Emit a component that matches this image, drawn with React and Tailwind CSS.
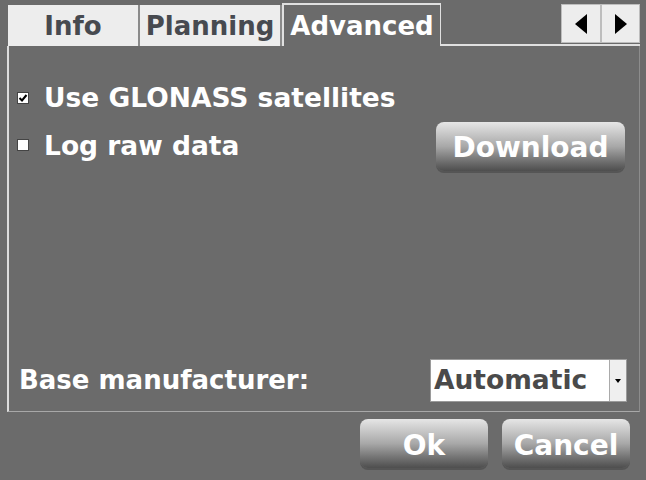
import React, { useState } from 'react';

const font = { fontFamily: '"DejaVu Sans", "Liberation Sans", sans-serif' };

const GlossButton = ({ label, className }) => (
  <button
    className={`rounded-lg bg-gradient-to-b from-[#e6e6e6] via-[#a8a8a8] to-[#4e4e4e] text-white font-bold text-[28px] leading-none shadow-[0_2px_0_#555] ${className}`}
    style={font}
  >
    {label}
  </button>
);

const Tab = ({ label, active, className }) => (
  <div
    className={
      active
        ? `h-[43px] mt-[-2px] border-t-2 border-l-2 border-r border-[#e0e0e0] border-b-0 bg-[#6b6b6b] text-white flex items-center justify-center ${className}`
        : `h-[41px] bg-[#ededed] text-[#474a50] border-r-2 border-[#8a8a8a] flex items-center justify-center ${className}`
    }
  >
    <span className="text-[26px] font-bold leading-none" style={font}>{label}</span>
  </div>
);

const Check = ({ checked, onClick }) => (
  <button
    onClick={onClick}
    className="w-[12px] h-[12px] bg-white border border-[#444] flex items-center justify-center"
  >
    {checked && (
      <svg width="10" height="10" viewBox="0 0 10 10"><path d="M1.5 5 L4 7.5 L8.5 2" stroke="#000" strokeWidth="2" fill="none" /></svg>
    )}
  </button>
);

export default function App() {
  const [glonass, setGlonass] = useState(true);
  const [raw, setRaw] = useState(false);

  return (
    <div className="w-[646px] h-[480px] bg-[#6b6b6b] overflow-hidden flex flex-col" style={font}>
      {/* tab strip */}
      <div className="flex items-end pt-[5px] pl-[8px] pr-[6px] h-[46px]">
        <Tab label="Info" className="w-[132px]" />
        <Tab label="Planning" className="w-[142px]" />
        <Tab label="Advanced" active className="w-[159px]" />
        <div className="flex-1 self-stretch flex flex-col">
          <div className="flex-1 flex justify-end">
            <div className="flex h-[39px] mt-[-1px]">
              <button className="w-[40px] h-full bg-[#ededed] border border-[#bdbdbd] flex items-center justify-center">
                <svg width="12" height="20" viewBox="0 0 12 20"><path d="M12 0 L0 10 L12 20 Z" fill="#000" /></svg>
              </button>
              <button className="w-[39px] h-full bg-[#ededed] border border-[#bdbdbd] flex items-center justify-center">
                <svg width="12" height="20" viewBox="0 0 12 20"><path d="M0 0 L12 10 L0 20 Z" fill="#000" /></svg>
              </button>
            </div>
          </div>
          <div className="h-[2px] bg-[#e0e0e0]" />
        </div>
      </div>

      {/* panel */}
      <div className="mx-[7px] mr-[6px] h-[366px] border-l-2 border-r border-b border-[#dcdcdc] border-r-[#8c8c8c] border-b-[#a8a8a8] flex flex-col pl-[8px] pr-[12px]">
        <div className="flex items-center mt-[38px] h-[28px]">
          <Check checked={glonass} onClick={() => setGlonass(!glonass)} />
          <span className="ml-[15px] text-white text-[26.5px] font-bold leading-none">Use GLONASS satellites</span>
        </div>
        <div className="flex items-start justify-between mt-[10px]">
          <div className="flex items-center h-[28px] mt-[9px]">
            <Check checked={raw} onClick={() => setRaw(!raw)} />
            <span className="ml-[15px] mt-[3px] text-white text-[26.5px] font-bold leading-none">Log raw data</span>
          </div>
          <GlossButton label="Download" className="w-[189px] h-[49px] mr-[2px] pt-[2px]" />
        </div>
        <div className="flex-1" />
        <div className="flex items-center justify-between mb-[9px]">
          <span className="text-white text-[26px] font-bold leading-none ml-[2px] mt-[-2px]">Base manufacturer:</span>
          <div className="w-[197px] h-[43px] bg-white border border-[#9a9a9a] flex items-stretch">
            <span className="flex-1 flex items-center pl-[3px] text-[#4a4a4a] text-[26.5px] font-bold leading-none">Automatic</span>
            <div className="w-[17px] bg-[#efefef] border-l border-[#aaa] flex items-center justify-center">
              <svg width="6" height="4" viewBox="0 0 6 4"><path d="M0 0 L6 0 L3 4 Z" fill="#000" /></svg>
            </div>
          </div>
        </div>
      </div>

      {/* footer */}
      <div className="flex justify-end gap-[14px] pt-[7px] pr-[16px]">
        <GlossButton label="Ok" className="w-[128px] h-[49px] pt-[4px]" />
        <GlossButton label="Cancel" className="w-[128px] h-[49px] pt-[4px]" />
      </div>
    </div>
  );
}
